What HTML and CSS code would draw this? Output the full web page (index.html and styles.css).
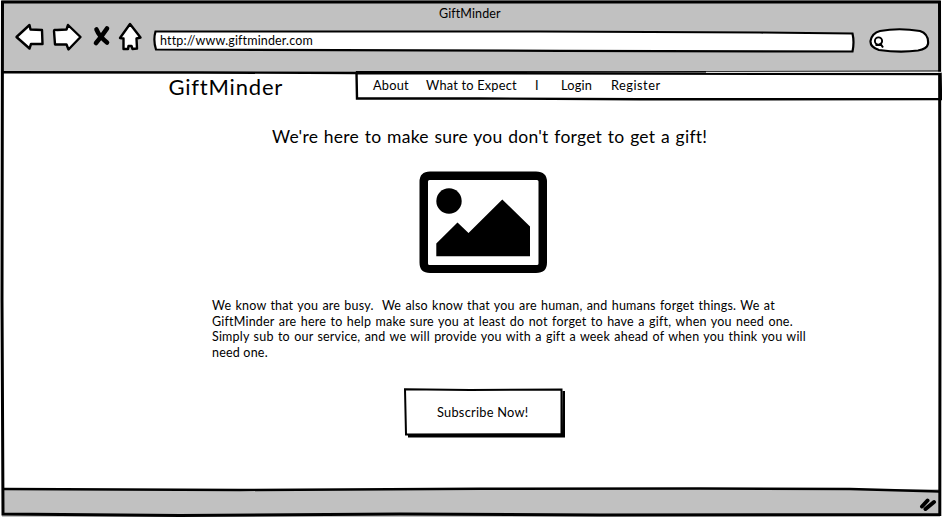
FILE: index.html
```html
<!DOCTYPE html>
<html lang="en">
<head>
<meta charset="utf-8">
<title>GiftMinder</title>
<link rel="stylesheet" href="styles.css">
</head>
<body>
<div class="window">
  <header class="chrome">
    <div class="window-title"><span class="t-title">GiftMinder</span></div>
    <div class="toolbar">
      <svg class="tools" width="130" height="34" viewBox="14 20 130 34">
        <g fill="#fff" stroke="#000" stroke-width="2.4" stroke-linejoin="round">
          <path d="M16.500 37L29.500 25L30.500 29.500L42 30L42.500 44L31 44L29.500 48.500Z"/>
          <path d="M54 31Q54 29.500 57 30L66.500 29.500L68 25L80.500 37L68.500 49.500L66.500 44.500L55 44.500Z"/>
          <path d="M130 24L140.500 37.500L136.500 38.500L137 48.500L132.500 49L131.500 46L128.500 46L128 49L123.500 49L123.500 38.500L120 38Z"/>
        </g>
        <path d="M96.500 29.500Q99 36 107 42.500M107 28.500Q102 36 96 43" fill="none" stroke="#000" stroke-width="4.600" stroke-linecap="round"/>
      </svg>
      <div class="address">
        <svg class="sketch" viewBox="153 29 703 24"><path d="M155.500 31.500L540 31.500L760 32.500L852.500 33.500Q854.500 42 852.500 51.500L560 50.800L156 49.500Q153 40 155.500 31.500Z" fill="#fff" stroke="#000" stroke-width="2.200"/></svg>
        <span class="t-url">http://www.giftminder.com</span>
      </div>
      <svg class="search" width="62" height="27" viewBox="868 27 62 27">
        <path d="M880 31Q899 27.500 920 31Q929 34 928 44Q927 49 918 50.500Q900 53 879 50Q870 47 870.500 41Q872 33 880 31Z" fill="#fff" stroke="#000" stroke-width="2.200"/>
        <circle cx="878.500" cy="41" r="3.600" fill="none" stroke="#000" stroke-width="1.900"/>
        <path d="M875.500 45H881M880 43L883 47.500" fill="none" stroke="#000" stroke-width="2"/>
      </svg>
    </div>
  </header>
  <div class="masthead">
    <div class="brand"><span class="t-brand">GiftMinder</span></div>
    <nav class="nav">
      <svg class="sketch" viewBox="355 71 587 30"><path d="M356.500 73L640 73.500L940.500 74L941 99L640 99.300L480 98.500L357 98.500Z" fill="#fff" stroke="#000" stroke-width="2.400"/></svg>
      <span class="about">About</span>
      <span class="expect">What to Expect</span>
      <span class="bar">I</span>
      <span class="login">Login</span>
      <span class="register">Register</span>
    </nav>
  </div>
  <main class="content">
    <h1><span class="t-head">We're here to make sure you don't forget to get a gift!</span></h1>
    <svg class="picture" width="128" height="102" viewBox="419 171 128 102">
      <path fill-rule="evenodd" d="M430 171.500H536Q547 171.500 547 182V262.500Q547 273 536 273H430Q419.500 273 419.500 262.500V182Q419.500 171.500 430 171.500ZM429.500 180Q428 180 428 181.500V263.500Q428 265 429.500 265H537Q538.500 265 538.500 263.500V181.500Q538.500 180 537 180Z"/>
      <circle cx="449" cy="201" r="12.700"/>
      <path d="M436.300 256.300V243.500L457.500 222.500L468.500 233L502.300 199.500L530 226.500V256.300Z"/>
    </svg>
    <p class="copy">
      <span class="line l1">We know that you are busy.&nbsp; We also know that you are human, and humans forget things. We at</span>
      <span class="line l2">GiftMinder are here to help make sure you at least do not forget to have a gift, when you need one.</span>
      <span class="line l3">Simply sub to our service, and we will provide you with a gift a week ahead of when you think you will</span>
      <span class="line l4">need one.</span>
    </p>
    <button class="subscribe" type="button">
      <svg class="sketch" viewBox="404 388 162 50"><path d="M408 434L562 434L562.500 391L565 391V437.500H408Z" fill="#000"/><path d="M405 389.300L470 390L561.500 389.500V434L406 434.500Z" fill="#fff" stroke="#000" stroke-width="2"/></svg>
      <span class="t-button">Subscribe Now!</span>
    </button>
  </main>
  <footer class="status"></footer>
  <svg class="frame" viewBox="0 0 942 517">
    <g fill="none" stroke="#000">
      <path stroke-width="3" d="M2.500 2L939.500 2L940 280L939.800 514.500L600 515L400 514L180 515.500L3 514L2 300Z"/>
      <path stroke-width="2.400" d="M3 72.300L200 72.500L356 73"/>
      <path stroke-width="1" d="M356 71.500L640 71.700L940 71"/>
      <path stroke-width="2.400" d="M3 489L240 490L480 488.800L700 488.500L850 489L940 491.500"/>
      <path stroke-width="4" stroke-linecap="round" d="M922 506.500L927.500 500.500M925.500 509L934 502"/>
    </g>
    <path d="M706 72.300L941 72.300" stroke="#fff"/>
  </svg>
</div>
</body>
</html>
```
FILE: styles.css
```css
* { box-sizing: border-box; }
body {
  margin: 0;
  background: #fff;
  color: #000;
  font-family: Lato, "Liberation Sans", sans-serif;
  font-variant-ligatures: none;
  overflow: hidden;
}
.window {
  position: relative;
  width: 942px;
  height: 517px;
  display: grid;
  grid-template-rows: 72px 28px 389px 28px;
}
.frame {
  position: absolute;
  inset: 0;
  width: 942px;
  height: 517px;
  pointer-events: none;
}
.sketch {
  position: absolute;
  inset: 0;
  width: 100%;
  height: 100%;
}
.window span {
  position: relative;
  white-space: nowrap;
}
.chrome, .status { background: #c1c1c1; margin: 0 2px; }
.chrome { padding-top: 4px; }
.window-title {
  display: flex;
  padding-left: 437px;
  height: 16px;
  line-height: 20px;
  font-size: 12.5px;
  letter-spacing: 0.1px;
}
.toolbar {
  display: flex;
  align-items: flex-start;
  padding-left: 12px;
}
.address {
  position: relative;
  width: 703px;
  height: 24px;
  margin: 9px 0 0 9px;
  padding-left: 7px;
  line-height: 23px;
  font-size: 12.5px;
  letter-spacing: 0.15px;
}
.search { margin: 7px 0 0 12px; }
.masthead { display: flex; }
.brand {
  width: 355px;
  padding-left: 168.5px;
  font-size: 22px;
  line-height: 30px;
  letter-spacing: 0.8px;
}
.nav {
  position: relative;
  width: 587px;
  height: 30px;
  margin-top: -1px;
  padding-left: 18px;
  display: flex;
  font-size: 12.8px;
  line-height: 28px;
  letter-spacing: 0.2px;
}
.about { width: 53px; }
.expect { width: 109px; }
.bar { width: 26px; }
.login { width: 50px; }
.register { letter-spacing: 0.5px; }
.content {
  display: flex;
  flex-direction: column;
  align-items: flex-start;
}
h1 {
  margin: 26px 0 0 272px;
  font-size: 17.5px;
  font-weight: 400;
  line-height: 22px;
  letter-spacing: 0.25px;
  word-spacing: 0.95px;
}
.picture { margin: 23px 0 0 419px; }
.copy {
  margin: 25px 0 0 212px;
  font-size: 12.5px;
  line-height: 15.7px;
  letter-spacing: 0.2px;
}
.line { display: block; width: max-content; }
.l1 { word-spacing: 0.85px; }
.l2 { word-spacing: 1px; }
.l3 { word-spacing: 0.92px; }
.subscribe {
  position: relative;
  width: 162px;
  height: 50px;
  margin: 27px 0 0 404px;
  padding: 0 0 2px 33px;
  border: 0;
  background: none;
  color: #000;
  font: 12.8px/48px Lato, "Liberation Sans", sans-serif;
  letter-spacing: 0.25px;
  text-align: left;
}
```
